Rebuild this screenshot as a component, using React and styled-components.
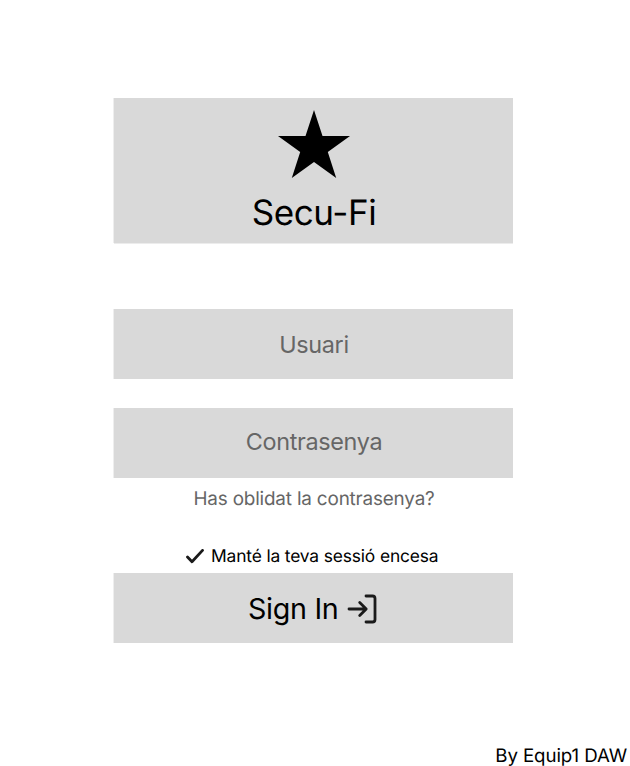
import React from "react";
import styled, { createGlobalStyle } from "styled-components";

const GlobalStyle = createGlobalStyle`
  * { box-sizing: border-box; }
  body { margin: 0; background: #fff; font-family: Inter, "Liberation Sans", sans-serif; color: #000; text-rendering: geometricPrecision; }
`;
const Page = styled.main`
  width: 630px; height: 766px; padding: 98px 3px 0 114px;
  display: flex; flex-direction: column; overflow: hidden;
`;
const Header = styled.header`
  width: 399px; height: 145px; flex: none; background: #d9d9d9;
  box-shadow: -1px 0 #eee, 0 1px #ececec;
  display: flex; flex-direction: column; align-items: center; padding: 12px 0 0 1px;
`;
const Star = styled.svg`
  width: 72px; height: 68px; display: block; flex: none;
`;
const Title = styled.h1`
  margin: 13px 0 0; font-size: 35px; line-height: 44px; font-weight: 400; letter-spacing: -0.4px; white-space: nowrap;
`;
const Form = styled.form`
  width: 399px; display: flex; flex-direction: column; margin-top: 66px;
`;
const Field = styled.input`
  width: 399px; height: 70px; border: 0; border-radius: 0; margin: 0; outline: 0;
  padding: 0 0 ${(p) => p.$lift || 0}px 1px; box-shadow: -1px 0 #eee;
  background: #d9d9d9; text-align: center; font: 400 23.4px Inter, sans-serif; letter-spacing: -0.32px;
  & + & { margin-top: 29px; }
  &::placeholder { color: #666; opacity: 1; }
`;
const Forgot = styled.a`
  margin-top: 9px; padding-left: 1px; text-align: center; font-size: 18.9px; letter-spacing: -0.18px; line-height: 24px; color: #666;
`;
const Remember = styled.div`
  margin-top: 33px; height: 24px; display: flex; align-items: center; padding-left: 72px; gap: 7px;
  font-size: 17.4px; letter-spacing: -0.15px; white-space: nowrap;
`;
const Check = styled.svg`
  width: 18px; height: 15px; flex: none;
`;
const Submit = styled.button`
  margin-top: 5px; width: 399px; height: 70px; border: 0; padding: 1px 0 0 134px; background: #d9d9d9; box-shadow: -1px 0 #eee;
  color: #000; display: flex; align-items: center; gap: 8px; font: 400 28.7px Inter, sans-serif; letter-spacing: -0.3px;
`;
const Login = styled.svg`
  width: 30px; height: 30px; flex: none;
`;
const Footer = styled.footer`
  margin-top: 101px; align-self: flex-end; font-size: 18.7px; letter-spacing: -0.1px; line-height: 24px; white-space: nowrap;
`;

export default function App() {
  return (
    <Page>
      <GlobalStyle />
      <Header>
        <Star viewBox="0 0 72 68">
          <path d="M36 0L44.5 26H72L49.8 42L58.2 68L36 52L13.8 68L22.2 42L0 26H27.5Z" />
        </Star>
        <Title>Secu-Fi</Title>
      </Header>
      <Form>
        <Field placeholder="Usuari" />
        <Field placeholder="Contrasenya" type="password" $lift={3} />
        <Forgot>Has oblidat la contrasenya?</Forgot>
        <Remember>
          <Check viewBox="0 0 18 15" fill="none" stroke="#1a1a1a" strokeWidth="2.8" strokeLinecap="round" strokeLinejoin="round">
            <path d="M1.5 8L6 12.8L16.5 1.4" />
          </Check>
          Manté la teva sessió encesa
        </Remember>
        <Submit type="button">
          Sign In
          <Login viewBox="0 0 30 30" fill="none" stroke="#1a1a1a" strokeWidth="2.8" strokeLinecap="round" strokeLinejoin="round">
            <path d="M19 2H25.5Q28 2 28 4.5V25.5Q28 28 25.5 28H19M12.7 8.5L19.2 15L12.7 21.5M19 15H2" />
          </Login>
        </Submit>
      </Form>
      <Footer>By Equip1 DAW</Footer>
    </Page>
  );
}
